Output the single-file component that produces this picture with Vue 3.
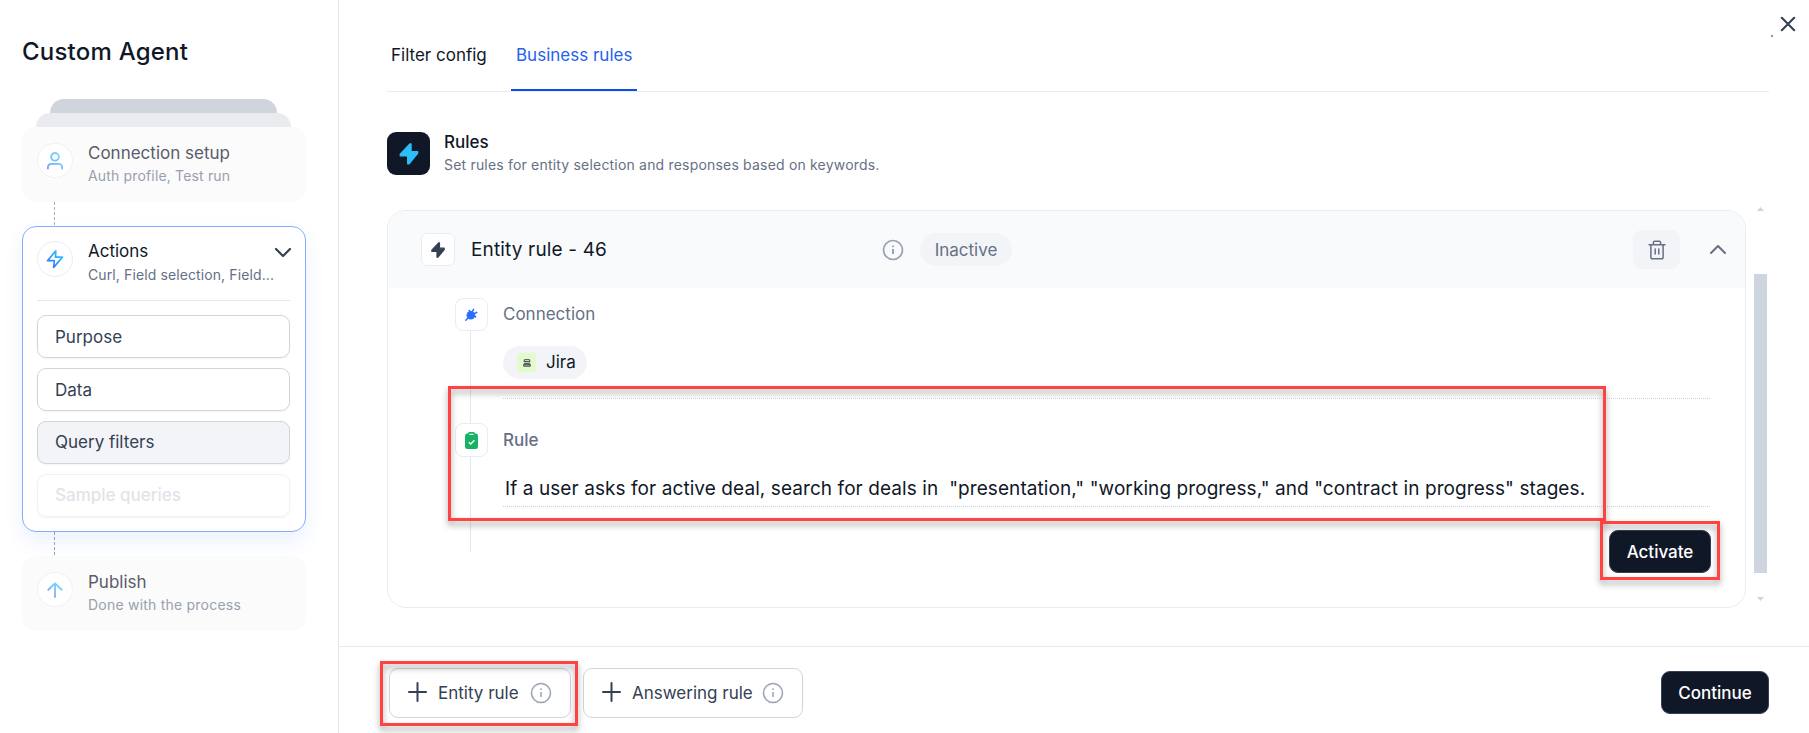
<script setup>
const actions = [
  { label: 'Purpose', state: '' },
  { label: 'Data', state: '' },
  { label: 'Query filters', state: 'active' },
  { label: 'Sample queries', state: 'disabled' }
]
const addButtons = [
  { label: 'Entity rule', cls: 'entity' },
  { label: 'Answering rule', cls: 'answering' }
]
</script>

<template>
  <div class="page">
    <svg class="defs" width="0" height="0">
      <defs>
        <linearGradient id="sky" x1="0" y1="24" x2="24" y2="0" gradientUnits="userSpaceOnUse">
          <stop offset="0.15" stop-color="#2970ff" />
          <stop offset="0.75" stop-color="#2cc5f8" />
        </linearGradient>
      </defs>
    </svg>

    <aside class="sidebar">
      <h1>Custom Agent</h1>
      <div class="stack-a"></div>
      <div class="stack-b"></div>

      <div class="step muted">
        <span class="circle">
          <svg width="20" height="20" viewBox="0 0 24 24" fill="none" stroke="url(#sky)" stroke-width="2.2" stroke-linecap="round" stroke-linejoin="round">
            <circle cx="12" cy="7" r="4.6" />
            <path d="M3.500 21v-1.500a4 4 0 0 1 4-4h9a4 4 0 0 1 4 4V21" />
          </svg>
        </span>
        <div class="step-text">
          <div class="step-title">Connection setup</div>
          <div class="step-sub s-conn">Auth profile, Test run</div>
        </div>
      </div>
      <div class="dash faded"></div>

      <div class="actions">
        <div class="actions-head">
          <span class="circle">
            <svg width="20" height="20" viewBox="0 0 24 24" fill="none" stroke="url(#sky)" stroke-width="2" stroke-linecap="round" stroke-linejoin="round">
              <path d="M13 2.200 3 14h8.200L10.400 22 21 9.800h-8.400z" />
            </svg>
          </span>
          <div class="step-text">
            <div class="step-title">Actions</div>
            <div class="step-sub s-act">Curl, Field selection, Field...</div>
          </div>
          <svg class="chev" width="18" height="11" viewBox="0 0 18 11" fill="none" stroke="#344054" stroke-width="2.2" stroke-linecap="round" stroke-linejoin="round"><path d="M2 2l7 7 7-7" /></svg>
        </div>
        <div v-for="a in actions" :key="a.label" class="item" :class="a.state">{{ a.label }}</div>
      </div>
      <div class="dash"></div>

      <div class="step muted">
        <span class="circle">
          <svg width="20" height="20" viewBox="0 0 24 24" fill="none" stroke="url(#sky)" stroke-width="2.2" stroke-linecap="round" stroke-linejoin="round">
            <path d="M12 20.500V4.200M4 11.700l8-7.700 8 7.700" />
          </svg>
        </span>
        <div class="step-text">
          <div class="step-title">Publish</div>
          <div class="step-sub s-pub">Done with the process</div>
        </div>
      </div>
    </aside>

    <main class="main">
      <svg class="close" width="16" height="16" viewBox="0 0 16 16" stroke="#344054" stroke-width="2.1" stroke-linecap="round"><path d="M1.800 1.800l12.400 12.400M14.200 1.800L1.800 14.200" /></svg>
      <i class="speck"></i>

      <div class="content">
        <nav class="tabs">
          <a class="tab tab-filter">Filter config</a>
          <a class="tab current">Business rules</a>
        </nav>

        <header class="rules">
          <span class="rules-icon">
            <svg width="20" height="24" viewBox="0 0 20 24" fill="#2bbef9" stroke="#2bbef9" stroke-width="1.400" stroke-linejoin="round"><path d="M10.900 2 1.300 12.300v1.500h7.400v8h1.300L18.600 11.300V9.800h-6.600V2z" /></svg>
          </span>
          <div>
            <div class="rules-title">Rules</div>
            <div class="rules-sub">Set rules for entity selection and responses based on keywords.</div>
          </div>
        </header>

        <div class="scroller">
          <section class="card">
            <div class="card-head">
              <span class="box head-box">
                <svg width="14" height="16" viewBox="0 0 14 16" fill="#344054" stroke="#344054" stroke-width="1.200" stroke-linejoin="round"><path d="M7.700.8 .8 8.100v1.200h5.200v5.900h1L13.200 7.500V6.200H8.500V.8z" /></svg>
              </span>
              <span class="card-title">Entity rule - 46</span>
              <svg width="22" height="22" viewBox="0 0 22 22"><circle cx="11" cy="11" r="9.500" fill="none" stroke="#98a2b3" stroke-width="1.700" /><path d="M11 10v5" stroke="#98a2b3" stroke-width="2" /><circle cx="11" cy="7.200" r="1" fill="#98a2b3" /></svg>
              <span class="pill inactive">Inactive</span>
              <span class="trash">
                <svg width="18" height="20" viewBox="0 0 18 20" fill="none" stroke="#667085" stroke-width="1.500" stroke-linecap="round" stroke-linejoin="round"><path d="M1 4.800h16M2.900 4.800v12.700a1.200 1.200 0 0 0 1.200 1.200h9.800a1.200 1.200 0 0 0 1.200-1.200V4.800M5.400 4.400V2.500A1.300 1.300 0 0 1 6.700 1.200h4.600a1.300 1.300 0 0 1 1.300 1.300v1.900M7.200 9v5M10.800 9v5" /></svg>
              </span>
              <svg width="18" height="11" viewBox="0 0 18 11" fill="none" stroke="#667085" stroke-width="2" stroke-linecap="round" stroke-linejoin="round"><path d="M2 9l7-7 7 7" /></svg>
            </div>

            <div class="card-body">
              <div class="rail">
                <span class="box">
                  <svg width="13" height="13" viewBox="0 0 13 13" fill="#2970ff" stroke="#2970ff" stroke-linecap="round"><circle cx="5.800" cy="7.200" r="4.300" stroke="none" /><path d="M4.200 2.600l6.300 6.300" stroke-width="1.600" /><path d="M.8 12.200l2.400-2.400M7 4.200l1.600-2.900M8.800 6l3-1.700" stroke-width="1.500" /></svg>
                </span>
                <i class="line first"></i>
                <span class="box clip">
                  <svg width="13" height="17" viewBox="0 0 13 17"><rect x="0" y="1.500" width="13" height="15.500" rx="2.300" fill="#16b364" /><rect x="3" y="0" width="7" height="4" rx="1.500" fill="#16b364" /><rect x="4.200" y="1.800" width="4.600" height="1.300" rx=".6" fill="#d3f8df" /><path d="M3.900 10.200l1.900 1.900 3.600-3.800" fill="none" stroke="#fff" stroke-width="1.400" /></svg>
                </span>
                <i class="line second"></i>
              </div>
              <div class="details">
                <div class="label">Connection</div>
                <div class="pill jira">
                  <span class="jira-icon">
                    <svg width="8" height="8" viewBox="0 0 8 8" fill="#a4b897" stroke="#3f4a52" stroke-width="1"><path d="M1.200.7h5.600M.7 2.600h6.600M1.300 1v1.500M6.700 1v1.500M1 4.300h6M.7 5.300v1.900h6.600V5.300z" /></svg>
                  </span>
                  <span class="jira-name">Jira</span>
                </div>
                <div class="dots"></div>
                <div class="label l-rule">Rule</div>
                <div class="rule-text">If a user asks for active deal, search for deals in&nbsp; "presentation," "working progress," and "contract in progress" stages.</div>
                <div class="dots low"></div>
                <button class="dark activate">Activate</button>
              </div>
            </div>
          </section>
          <div class="scrollbar">
            <svg width="7" height="4" viewBox="0 0 7 4"><path d="M0 4 3.500 0 7 4z" fill="#cdd5df" /></svg>
            <i class="thumb"></i>
            <svg width="7" height="4" viewBox="0 0 7 4"><path d="M0 0h7L3.500 4z" fill="#cdd5df" /></svg>
          </div>
        </div>
      </div>

      <footer class="footer">
        <button v-for="b in addButtons" :key="b.label" class="add" :class="b.cls">
          <svg class="plus" width="19" height="20" viewBox="0 0 19 20" stroke="#344054" stroke-width="2" stroke-linecap="round"><path d="M9.500 1v18M1 10h17" /></svg>
          <span>{{ b.label }}</span>
          <svg width="22" height="22" viewBox="0 0 22 22"><circle cx="11" cy="11" r="9.500" fill="none" stroke="#98a2b3" stroke-width="1.500" /><path d="M11 10v5" stroke="#98a2b3" stroke-width="1.500" /><circle cx="11" cy="7.200" r=".9" fill="#98a2b3" /></svg>
        </button>
        <button class="dark continue">Continue</button>
      </footer>
    </main>

    <i class="mark mark-rule"></i>
    <i class="mark mark-activate"></i>
    <i class="mark mark-entity"></i>
  </div>
</template>

<style>
body { margin: 0; background: #fff; overflow: hidden; }
</style>

<style scoped>
* { box-sizing: border-box; }
.page { position: relative; display: flex; width: 1809px; height: 733px; overflow: hidden; background: #fff; font-family: Inter, "Liberation Sans", sans-serif; color: #101828; }
.page svg { display: block; flex: none; }
.page .defs { position: absolute; }
button { font: inherit; padding: 0; margin: 0; }

.sidebar { width: 339px; height: 733px; flex: none; border-right: 1px solid #e4e7ec; padding: 36px 32px 0 22px; display: flex; flex-direction: column; }
h1 { margin: 0 0 31px; font-size: 24px; line-height: 32px; font-weight: 500; letter-spacing: 0.22px; white-space: nowrap; }
.stack-a { height: 14px; margin: 0 29px 0 28px; border-radius: 14px 14px 0 0; background: #d0d4dd; flex: none; }
.stack-b { height: 14px; margin: 0 15px 0 14px; border-radius: 14px 14px 0 0; background: #eaebef; flex: none; }
.step { height: 75px; flex: none; border-radius: 14px; padding: 16px 15px 0; display: flex; gap: 15px; }
.muted { background: #fbfbfb; }
.muted .circle svg { opacity: .65; }
.circle { width: 36px; height: 36px; flex: none; border: 1px solid #eaecf0; border-radius: 50%; background: #fff; display: flex; align-items: center; justify-content: center; }
.muted .circle { border-color: #f2f2f4; height: 35px; }
.step-text { flex: 1; min-width: 0; white-space: nowrap; }
.step-title { font-size: 17px; line-height: 22px; }
.step-sub { font-size: 14px; line-height: 20px; margin-top: 2px; color: #667085; }
.s-conn { letter-spacing: .16px; }
.s-act { letter-spacing: .11px; }
.s-pub { letter-spacing: .22px; }
.muted .step-text { margin-top: -1px; }
.muted .step-title { color: #585d69; }
.muted .step-sub { color: #98a0ae; margin-top: 2px; }
.dash { width: 1px; height: 24px; flex: none; margin-left: 32px; background: repeating-linear-gradient(#98a2b3 0 3px, transparent 3px 5px); }
.faded { opacity: .85; }
.actions { height: 306px; flex: none; border: 1px solid #84adff; border-radius: 14px; padding: 14px 15px 0 14px; background: #fff; box-shadow: 0 10px 20px rgba(41, 112, 255, .09); display: flex; flex-direction: column; gap: 10px; }
.actions-head { height: 60px; border-bottom: 1px solid #e4e7ec; margin-bottom: 4px; display: flex; gap: 15px; flex: none; }
.actions-head .step-text { margin-top: -1px; }
.actions-head .step-sub { margin-top: 3px; }
.chev { margin: 6px -2px 0 -30px; }
.item { height: 43px; flex: none; border: 1px solid #d0d5dd; border-radius: 9px; padding: 0 17px; font-size: 17px; line-height: 42px; color: #344054; box-shadow: 0 1px 2px rgba(16, 24, 40, .05); }
.item.active { background: #f2f4f7; line-height: 41px; }
.item.disabled { border-color: #f0f1f4; color: #e1e4e9; font-weight: 500; line-height: 41px; }

.main { position: relative; flex: 1; min-width: 0; display: flex; flex-direction: column; }
.close { position: absolute; left: 1441px; top: 16px; }
.speck { position: absolute; left: 1432px; top: 35px; width: 2px; height: 2px; background: #8b96aa; }
.content { height: 646px; flex: none; padding: 20px 40px 0 48px; }
.tabs { height: 72px; border-bottom: 1px solid #eaecec; display: flex; gap: 15px; }
.tab { height: 71px; font-size: 17px; line-height: 70px; padding: 0 4px; white-space: nowrap; }
.tab-filter { width: 109px; }
.current { width: 126px; padding: 0 5px; color: #2463eb; border-bottom: 2px solid #0c4ee8; }
.rules { height: 43px; margin-top: 40px; display: flex; gap: 14px; }
.rules-icon { width: 43px; height: 43px; border-radius: 9px; background: #101828; display: flex; align-items: center; justify-content: center; }
.rules-title { font-size: 17px; line-height: 20px; font-weight: 500; }
.rules-sub { font-size: 14px; line-height: 20px; margin-top: 3px; color: #667085; letter-spacing: .19px; white-space: nowrap; }

.scroller { display: flex; gap: 8px; margin-top: 35px; }
.card { width: 1359px; height: 398px; border: 1px solid #eaecf0; border-radius: 19px; overflow: hidden; flex: none; }
.card-head { height: 77px; background: #f9fafb; padding: 0 18px 0 33px; display: flex; align-items: center; }
.box { width: 33px; height: 33px; border: 1px solid #eaecf0; border-radius: 8px; background: #fff; display: flex; align-items: center; justify-content: center; flex: none; }
.head-box { width: 34px; border-radius: 6px; }
.card-title { width: 411px; margin-left: 16px; font-size: 19px; letter-spacing: .15px; white-space: nowrap; }
.pill { height: 33px; border-radius: 17px; background: #f2f4f7; display: flex; align-items: center; font-size: 17px; white-space: nowrap; }
.inactive { margin-left: 16px; width: 92px; justify-content: center; color: #667085; }
.trash { width: 47px; height: 39px; border-radius: 9px; background: #f2f4f7; margin-left: auto; margin-right: 29px; display: flex; align-items: center; justify-content: center; }
.card-body { display: flex; gap: 15px; padding: 10px 34px 0 67px; }
.rail { width: 33px; display: flex; flex-direction: column; }
.line { width: 1px; margin-left: 15px; background: #e4e7ec; }
.line.first { height: 92px; }
.line.second { height: 95px; }
.box.clip { height: 34px; }
.details { flex: 1; min-width: 0; display: flex; flex-direction: column; }
.label { font-size: 17px; line-height: 32px; height: 33px; color: #667085; }
.l-rule { margin-top: 25px; font-weight: 500; }
.jira { width: 84px; margin-top: 15px; padding-left: 14px; gap: 10px; }
.jira-icon { width: 19px; height: 19px; border-radius: 3px; background: #e3fbcc; display: flex; align-items: center; justify-content: center; }
.jira-name { line-height: 20px; padding-bottom: 1px; }
.dots { height: 1px; flex: none; margin-top: 19px; background: repeating-linear-gradient(90deg, #cdd3dd 0 1px, transparent 1px 2px); }
.dots.low { margin-top: 2px; }
.rule-text { height: 30px; margin: 17px 0 0 2px; font-size: 19px; line-height: 30px; letter-spacing: .08px; white-space: nowrap; }
.dark { border: 1px solid #344054; background: #101828; color: #fff; height: 43px; border-radius: 9px; font-size: 17px; font-weight: 500; }
.activate { width: 102px; align-self: flex-end; margin-top: 23px; flex: none; }
.scrollbar { width: 13px; height: 394px; margin-top: -3px; display: flex; flex-direction: column; align-items: center; }
.thumb { width: 13px; height: 299px; margin: 63px 0 24px; background: #cdd5df; flex: none; }

.footer { height: 87px; border-top: 1px solid #e6e9ee; padding: 21px 40px 0 50px; display: flex; gap: 12px; }
.add { height: 50px; border: 1px solid #d0d5dd; border-radius: 9px; background: #fff; display: flex; align-items: center; font-size: 17px; color: #344054; padding: 0 18px; white-space: nowrap; }
.entity { width: 182px; }
.answering { width: 220px; }
.add .plus { margin-top: -2px; margin-right: 11px; }
.add svg:last-child { margin-left: auto; }
.continue { width: 108px; margin: 3px 0 0 auto; }

.mark { position: absolute; border: 3px solid #ff4242; filter: drop-shadow(0 4px 3px rgba(0, 0, 0, .38)); pointer-events: none; }
.mark-rule { left: 448px; top: 386px; width: 1158px; height: 135px; }
.mark-activate { left: 1600px; top: 521px; width: 120px; height: 59px; }
.mark-entity { left: 380px; top: 661px; width: 198px; height: 65px; }
</style>
